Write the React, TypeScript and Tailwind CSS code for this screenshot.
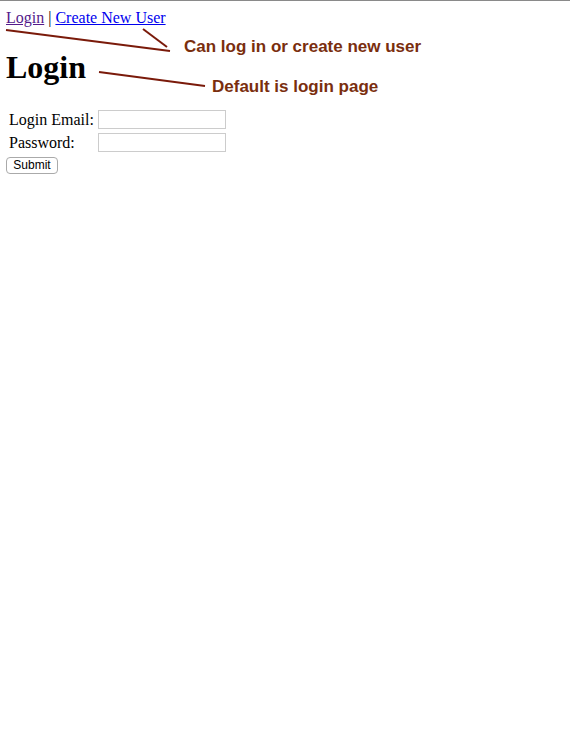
export default function App() {
  return (
    <div className="relative min-h-[741px] w-[570px] bg-white border-t border-[#8a8a8a] font-['Liberation_Serif',serif] text-black">
      <div className="px-[6px] pt-[8px]">
        {/* Top nav */}
        <div className="text-[16px] leading-[18px]">
          <a href="#" className="text-[#551a8b] underline">Login</a>
          <span> | </span>
          <a href="#" className="text-[#0000ee] underline">Create New User</a>
        </div>

        <h1 className="mt-[22px] text-[32px] font-bold leading-[36px]">Login</h1>

        {/* Form */}
        <table className="mt-[21px] border-separate border-spacing-x-[2px] border-spacing-y-[4px] text-[16px] leading-[19px]">
          <tbody>
            <tr>
              <td className="pl-[1px] pr-[2px]">Login Email:</td>
              <td>
                <input className="block h-[19px] w-[128px] border border-[#cccccc] bg-white" />
              </td>
            </tr>
            <tr>
              <td className="pl-[1px] pr-[2px]">Password:</td>
              <td>
                <input type="password" className="block h-[19px] w-[128px] border border-[#cccccc] bg-white" />
              </td>
            </tr>
          </tbody>
        </table>
        <button className="block mt-[1px] h-[17px] w-[52px] rounded-[4px] border border-[#aaaaaa] bg-white font-['Liberation_Sans',sans-serif] text-[12px] leading-[15px]">
          Submit
        </button>
      </div>

      {/* Annotations */}
      <svg className="pointer-events-none absolute left-0 top-0" width="570" height="120">
        <line x1="6" y1="29" x2="170" y2="50" stroke="#7a1a0a" strokeWidth="2" />
        <line x1="143" y1="28" x2="167" y2="46" stroke="#7a1a0a" strokeWidth="2" />
        <line x1="99" y1="71" x2="205" y2="85" stroke="#7a1a0a" strokeWidth="2" />
      </svg>
      <div className="absolute left-[184px] top-[36px] font-['Liberation_Sans',sans-serif] text-[17px] font-bold leading-[20px] text-[#7a2e0e]">
        Can log in or create new user
      </div>
      <div className="absolute left-[212px] top-[76px] font-['Liberation_Sans',sans-serif] text-[17px] font-bold leading-[20px] text-[#7a2e0e]">
        Default is login page
      </div>
    </div>
  );
}
